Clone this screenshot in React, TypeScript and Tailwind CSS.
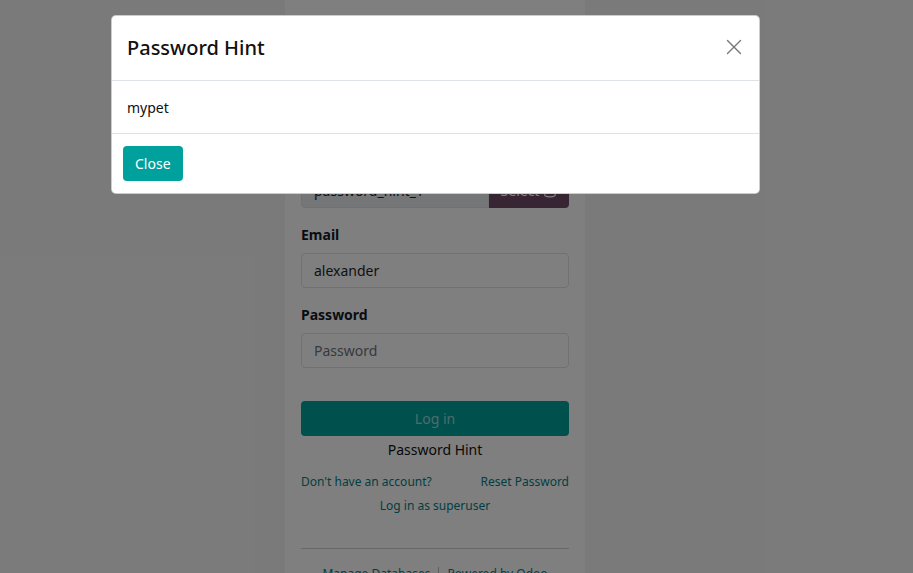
import { Database, X } from "lucide-react";

const font = { fontFamily: '"Noto Sans", "Open Sans", sans-serif' };

function Field({ label, children }: { label: string; children: React.ReactNode }) {
  return (
    <div className="mb-4">
      <label className="block mb-2 text-[14px] leading-[21px] font-bold text-[#111827]">{label}</label>
      {children}
    </div>
  );
}

export default function App() {
  return (
    <div className="relative min-h-screen bg-[#f5f5f5] overflow-hidden" style={font}>
      {/* login page behind the dialog */}
      <div className="ml-[285px] w-[300px] min-h-[573px] bg-white px-4 pt-[144px] text-[14px] text-[#212529]">
        <Field label="Database">
          <div className="flex h-[35px]">
            <input
              readOnly
              value="password_hint_1"
              className="flex-1 min-w-0 px-3 border border-[#dee2e6] rounded-l-[4px] bg-[#e9ecef] text-[14px] outline-none"
            />
            <button className="w-[80px] flex items-center justify-center gap-1 bg-[#714b67] text-white rounded-r-[4px]">
              Select <Database size={14} />
            </button>
          </div>
        </Field>
        <Field label="Email">
          <input
            readOnly
            value="alexander"
            className="w-full h-[35px] px-3 border border-[#dee2e6] rounded-[4px] bg-white text-[14px] outline-none"
          />
        </Field>
        <Field label="Password">
          <input
            readOnly
            placeholder="Password"
            className="w-full h-[35px] px-3 border border-[#dee2e6] rounded-[4px] bg-white text-[14px] outline-none placeholder:text-[#6c757d]"
          />
        </Field>
        <button className="mt-[17px] w-full h-[35px] rounded-[4px] bg-[#00a09d] text-white/60 text-[14px]">
          Log in
        </button>
        <div className="mt-[3px] text-center text-[14px] leading-[21px] text-[#111]">Password Hint</div>
        <div className="mt-[13px] flex justify-between text-[12px] leading-[18px] text-[#017e84]">
          <span>Don't have an account?</span>
          <span>Reset Password</span>
        </div>
        <div className="mt-[6px] text-center text-[12px] leading-[18px] text-[#017e84]">Log in as superuser</div>
        <div className="mt-[33px] border-t border-[#d0d0d0]" />
        <div className="mt-[16px] flex justify-center items-center gap-2 text-[12px] leading-[18px] text-[#017e84]">
          <span>Manage Databases</span>
          <span className="h-[14px] border-l border-[#bbb]" />
          <span>Powered by Odoo</span>
        </div>
      </div>

      {/* backdrop */}
      <div className="absolute inset-0 bg-black/50" />

      {/* dialog */}
      <div className="absolute left-[111px] top-[15px] w-[649px] bg-white rounded-[5px] border border-black/20">
        <div className="flex items-center justify-between h-[65px] pl-[15px] pr-4 border-b border-[#dee2e6]">
          <h4 className="text-[20px] font-medium text-[#111]">Password Hint</h4>
          <X size={26} strokeWidth={1.3} className="text-[#777] mr-[-4px] -mt-[2px]" />
        </div>
        <div className="h-[53px] pl-[15px] pr-4 flex items-center text-[14px] text-[#111] border-b border-[#dee2e6]">mypet</div>
        <div className="h-[59px] pl-[11px] pr-3 flex items-center">
          <button className="h-[35px] px-3 rounded-[4px] bg-[#00a09d] text-white text-[14px]">Close</button>
        </div>
      </div>
    </div>
  );
}
